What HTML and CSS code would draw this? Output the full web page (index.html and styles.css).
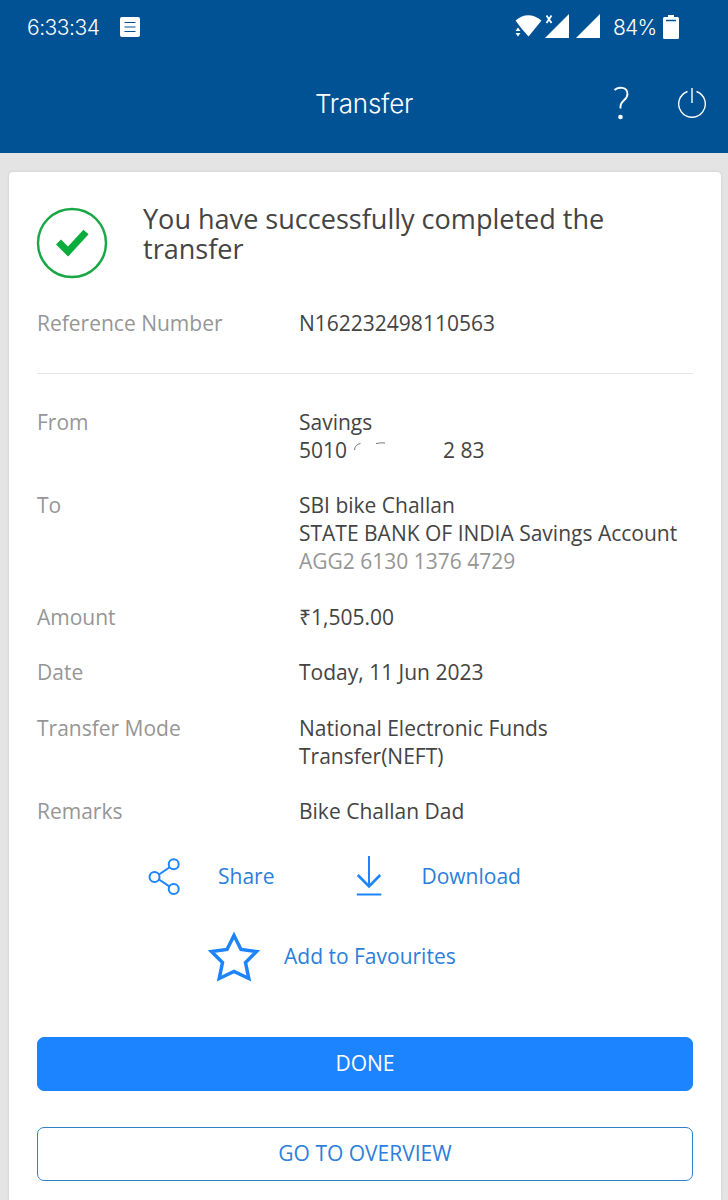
FILE: index.html
```html
<!DOCTYPE html>
<html lang="en">
<head>
  <meta charset="UTF-8">
  <title>Transfer</title>
  <link rel="stylesheet" href="styles.css">
</head>
<body>
  <header class="header">
    <div class="status-bar">
      <span class="clock">6:33:34</span>
      <svg class="note-icon" width="20" height="20" viewBox="0 0 20 20">
        <rect width="20" height="20" rx="2" fill="#fff"/>
        <path d="M4.5 5.5h11M4.5 10h11M4.5 14.5h11" stroke="#005294" stroke-width="1.2"/>
      </svg>
      <svg class="signal-icons" width="86" height="26" viewBox="0 0 86 26" fill="#fff">
        <path d="M.5 6.500Q13-4 26.500 6.500L13.500 22.500L6.500 14.500Z"/>
        <path d="M.5 17h5L3 13.500ZM.5 19h5L3 22.500Z"/>
        <path d="M31.500 1.500l5 7.500M36.500 1.500l-5 7.500" stroke="#fff" stroke-width="1.800"/>
        <path d="M30 24L54 0V24ZM61 24L85 0V24Z"/>
      </svg>
      <span class="battery-level">84%</span>
      <svg class="battery-icon" width="16" height="24" viewBox="0 0 16 24">
        <path d="M5 0h6v2h3.500q1.500 0 1.500 1.500v19q0 1.500-1.500 1.500h-13Q0 24 0 22.500v-19Q0 2 1.500 2H5Z" fill="#fff"/>
        <path d="M3 5.500h10" stroke="#005294" stroke-width="1.500"/>
      </svg>
    </div>
    <div class="title-bar">
      <h1 class="title">Transfer</h1>
      <div class="title-actions">
        <svg width="18" height="34" viewBox="0 0 18 34" fill="none" stroke="#fff" stroke-width="1.900">
          <path d="M2.500 4C6 .5 15.500 .5 15.500 8C15.500 14.500 8.500 14 8.500 20.500V22.500"/>
          <circle cx="8.500" cy="31" r="2.300" fill="#fff" stroke="none"/>
        </svg>
        <svg width="30" height="32" viewBox="0 0 30 32" fill="none" stroke="#fff" stroke-width="1.400">
          <path d="M10.500 5.500A13.300 13.300 0 1 0 19.500 5.500M15 2V17"/>
        </svg>
      </div>
    </div>
  </header>

  <main class="card">
    <div class="success">
      <svg width="72" height="72" viewBox="0 0 72 72">
        <circle cx="36" cy="36" r="34" fill="none" stroke="#17a845" stroke-width="2.400"/>
        <path d="M22.500 35L32 44.500L50 25" fill="none" stroke="#0aad3c" stroke-width="7"/>
      </svg>
      <h2 class="success-text">You have successfully completed the transfer</h2>
    </div>

    <dl class="details reference">
      <dt>Reference Number</dt>
      <dd>N162232498110563</dd>
    </dl>

    <dl class="details">
      <dt>From</dt>
      <dd>Savings
        <div class="account">
          <span>5010</span>
          <!-- hidden digits, only their top edges show -->
          <svg class="mask" width="91" height="20" viewBox="0 0 91 20" fill="none" stroke="#777" stroke-width="1">
            <path d="M1.500 9Q2 3.500 7.500 2.500M23 2.500Q28 1.500 32 2"/>
          </svg>
          <span>2 83</span>
        </div>
      </dd>
      <dt>To</dt>
      <dd>SBI bike Challan<br>STATE BANK OF INDIA Savings Account<br><span class="muted">AGG2 6130 1376 4729</span></dd>
      <dt>Amount</dt>
      <dd>₹1,505.00</dd>
      <dt>Date</dt>
      <dd>Today, 11 Jun 2023</dd>
      <dt>Transfer Mode</dt>
      <dd>National Electronic Funds<br>Transfer(NEFT)</dd>
      <dt>Remarks</dt>
      <dd>Bike Challan Dad</dd>
    </dl>

    <div class="actions">
      <a class="action share">
        <svg width="34" height="38" viewBox="0 0 34 38" fill="none" stroke="#1d84fb" stroke-width="2">
          <circle cx="6.500" cy="19" r="5"/>
          <circle cx="25.700" cy="6.300" r="5"/>
          <circle cx="25.700" cy="31" r="5"/>
          <path d="M11 16.500L21.300 9.500M11 21.500L21.300 28.300"/>
        </svg>
        Share
      </a>
      <a class="action download">
        <svg width="26" height="42" viewBox="0 0 26 42" fill="none" stroke="#1d84fb">
          <path d="M13 0V30M.8 38.500h24.500" stroke-width="2"/>
          <path d="M1.800 19L13 30.500L24.200 19" stroke-width="2.600"/>
        </svg>
        Download
      </a>
    </div>
    <a class="action favourite">
      <svg width="54" height="52" viewBox="0 0 54 52" fill="none" stroke="#1d84fb" stroke-width="3.500">
        <path d="M27 4.500L34 18.500L49.500 20.500L38.500 31.500L41.800 47.500L27 40.500L12.200 47.500L15.500 31.500L4.500 20.500L20 18.500Z"/>
      </svg>
      Add to Favourites
    </a>

    <button class="btn btn-primary">DONE</button>
    <button class="btn btn-outline">GO TO OVERVIEW</button>
  </main>
</body>
</html>
```
FILE: styles.css
```css
* {
  box-sizing: border-box;
}
body {
  margin: 0;
  height: 1200px;
  overflow: hidden;
  display: flex;
  flex-direction: column;
  background: #e4e4e4;
  font-family: 'Open Sans', 'Noto Sans', sans-serif;
  font-size: 21px;
  line-height: 27.8px;
  color: #444;
}
svg {
  display: block;
  flex: none;
}
.header {
  height: 153px;
  flex: none;
  background: #005294;
  color: #fff;
  font-family: Inter, 'Liberation Sans', sans-serif;
  font-weight: 300;
}
.status-bar {
  height: 54px;
  padding: 0 49px 0 27px;
  display: flex;
  align-items: center;
}
.clock {
  width: 93px;
  padding-top: 1px;
  font-size: 21px;
  letter-spacing: -0.5px;
}
.signal-icons {
  margin-left: auto;
}
.battery-level {
  width: 43px;
  margin: 0 7px 0 12px;
  padding-top: 1px;
  font-size: 21px;
  letter-spacing: -0.8px;
}
.title-bar {
  height: 99px;
  display: grid;
  grid-template-columns: 1fr auto 1fr;
  align-items: start;
  padding: 32px 21px 0;
}
.title {
  grid-column: 2;
  margin: 3px 0 0;
  font-size: 26px;
  line-height: 30px;
  font-weight: 300;
  letter-spacing: -0.25px;
}
.title-actions {
  display: flex;
  justify-content: flex-end;
  gap: 47px;
}
.card {
  flex: 1;
  margin: 19px 7px 0 9px;
  padding: 35px 28px 0;
  background: #fff;
  border-radius: 4px 4px 0 0;
  box-shadow: 0 0 3px rgba(0,0,0,0.12);
}
.success {
  display: flex;
  gap: 35px;
  height: 103px;
  margin-left: -1px;
  align-items: flex-start;
}
.success-text {
  margin: -3px 0 0;
  font-size: 27.05px;
  line-height: 30px;
  font-weight: 400;
}
.details {
  display: grid;
  grid-template-columns: 262px 1fr;
  row-gap: 27.8px;
  margin: 0;
}
.details dt,
.muted {
  color: #969696;
}
.details dd {
  margin: 0;
  white-space: nowrap;
}
.reference {
  height: 64px;
  margin-bottom: 35px;
  border-bottom: 1px solid #e6e6e6;
}
.account {
  display: flex;
  align-items: center;
}
.mask {
  margin: 0 -1px 0 6px;
}
.actions {
  display: flex;
  height: 42px;
  margin-top: 30px;
}
.action {
  display: flex;
  align-items: center;
  color: #2b7fdb;
}
.share {
  margin-left: 111px;
  gap: 36px;
}
.download {
  margin-left: 82px;
  gap: 39px;
}
.favourite {
  height: 52px;
  margin: 33px 0 0 170px;
  gap: 23px;
}
.btn {
  display: block;
  width: 100%;
  height: 54px;
  border: 1px solid #1d84fb;
  border-radius: 7px;
  font: inherit;
}
.btn-primary {
  margin-top: 54px;
  background: #1d84ff;
  color: #fff;
}
.btn-outline {
  margin-top: 36px;
  background: #fff;
  border-color: #3480c8;
  color: #2b7fdb;
}
```
